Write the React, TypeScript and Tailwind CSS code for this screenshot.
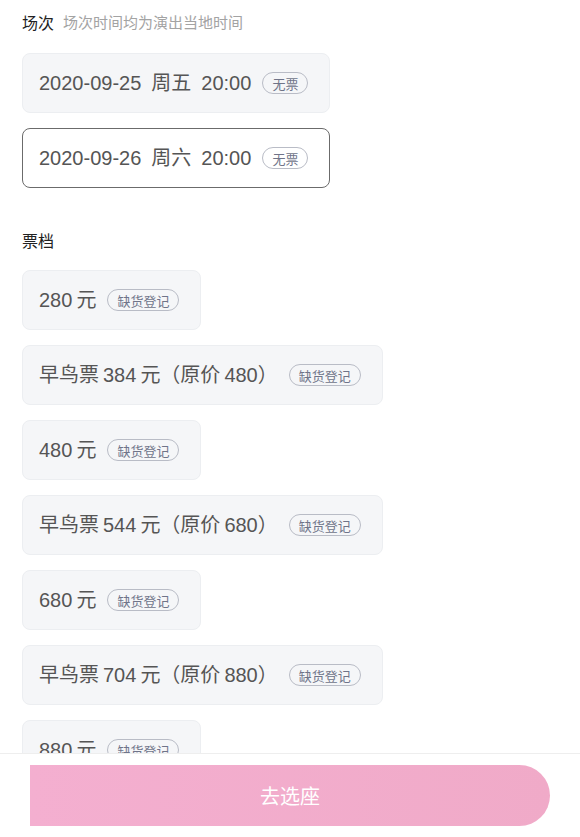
import React from "react";

const cjk = { fontFamily: '"Noto Sans CJK SC", "Noto Sans", sans-serif' };
const mixed = { fontFamily: '"Liberation Sans", "Noto Sans CJK SC", sans-serif' };

function Badge({ text }: { text: string }) {
  return (
    <span
      className="ml-[11px] inline-flex h-[22px] items-center rounded-full border border-[#b9bcc6] px-[9px] text-[13px] leading-none text-[#6f7489]"
      style={cjk}
    >
      {text}
    </span>
  );
}

function Card({
  label,
  badge,
  selected,
  gap,
}: {
  label: string;
  badge: string;
  selected?: boolean;
  gap: number;
}) {
  const parts = label.split("|");
  return (
    <div
      className={
        "flex h-[60px] w-fit items-center rounded-[8px] pl-[16px] pr-[21px] " +
        (selected ? "border-[1.5px] border-[#6b6b6b] bg-white" : "border border-[#eceef1] bg-[#f5f6f8]")
      }
    >
      <span className="flex items-center text-[20px] leading-none text-[#555555]" style={mixed}>
        {parts.map((p, i) => (
          <span key={i} style={{ marginLeft: i === 0 ? 0 : gap }}>
            {p}
          </span>
        ))}
      </span>
      <Badge text={badge} />
    </div>
  );
}

export default function App() {
  const tickets = [
    "280|元",
    "早鸟票|384|元（原价|480）",
    "480|元",
    "早鸟票|544|元（原价|680）",
    "680|元",
    "早鸟票|704|元（原价|880）",
    "880|元",
  ];
  return (
    <div className="flex h-[837px] w-[580px] flex-col overflow-hidden bg-white" style={cjk}>
      <div className="flex-1 overflow-hidden px-[22px] pt-[10px]">
        <div className="flex h-[24px] items-center">
          <span className="text-[16px] text-[#222222]">场次</span>
          <span className="ml-[9px] text-[15px] text-[#a3a3a3]">场次时间均为演出当地时间</span>
        </div>
        <div className="mt-[19px] flex flex-col gap-[15px]">
          <Card label="2020-09-25|周五|20:00" badge="无票" gap={10} />
          <Card label="2020-09-26|周六|20:00" badge="无票" gap={10} selected />
        </div>
        <div className="mt-[40px] flex h-[24px] items-center">
          <span className="text-[16px] text-[#222222]">票档</span>
        </div>
        <div className="mt-[18px] flex flex-col gap-[15px]">
          {tickets.map((t) => (
            <Card key={t} label={t} badge="缺货登记" gap={4} />
          ))}
        </div>
      </div>
      <div className="h-[84px] shrink-0 border-t border-[#eeeeee] bg-white px-[30px] pt-[11px]">
        <button className="flex h-[61px] w-full items-center justify-center rounded-l-[30px] rounded-r-full rounded-bl-[4px] bg-gradient-to-r from-[#f4afd0] to-[#f0aac8] text-[20px] text-white">
          去选座
        </button>
      </div>
    </div>
  );
}
